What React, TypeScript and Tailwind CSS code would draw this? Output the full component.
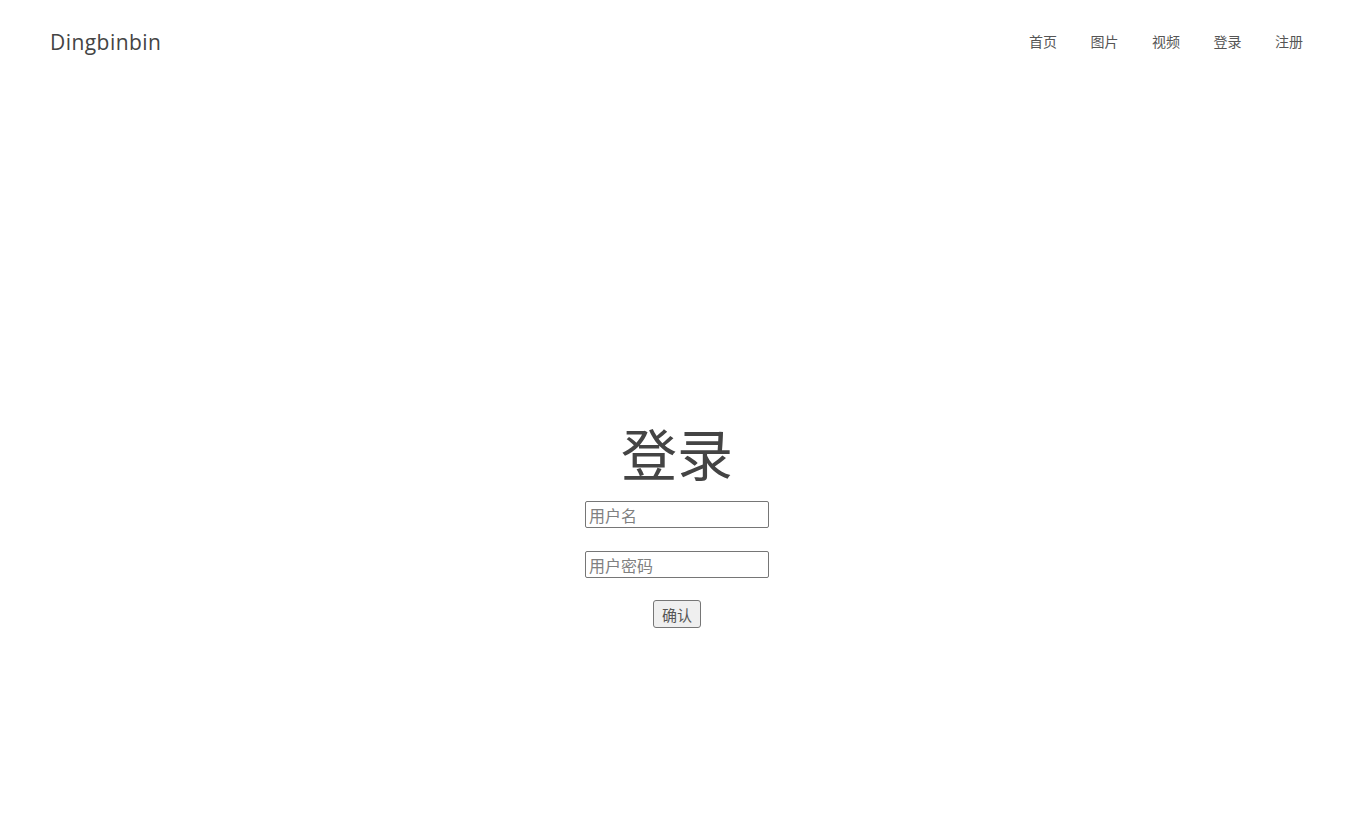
import React from "react";

export default function App() {
  return (
    <div className="w-[1354px] h-[820px] bg-white text-[#444] overflow-hidden">
      <header className="h-[84px] pl-[50px] pr-[51px] flex items-center justify-between font-['Segoe_UI','Open_Sans','Noto_Sans_CJK_SC',sans-serif]">
        <div className="text-[21px] tracking-[0.45px] text-[#444] leading-none">Dingbinbin</div>
        <nav className="flex gap-[33.5px] text-[14px] leading-[20px] -mt-[2px] text-[#555] font-['Noto_Sans_CJK_SC',sans-serif]">
          <span>首页</span>
          <span>图片</span>
          <span>视频</span>
          <span>登录</span>
          <span>注册</span>
        </nav>
      </header>
      <main className="flex flex-col items-center font-['Noto_Sans_CJK_SC',sans-serif]">
        <h1 className="mt-[336px] text-[56px] leading-[64px] font-normal text-[#444]">登录</h1>
        <input
          className="mt-[17px] w-[184px] h-[27px] border border-[#767676] rounded-[2px] px-[3px] text-[16px] leading-none placeholder:text-[#808080] outline-none"
          placeholder="用户名"
        />
        <input
          className="mt-[23px] w-[184px] h-[27px] border border-[#767676] rounded-[2px] px-[3px] text-[16px] leading-none placeholder:text-[#808080] outline-none"
          placeholder="用户密码"
        />
        <button className="mt-[22px] w-[48px] h-[28px] border border-[#767676] rounded-[3px] bg-[#efefef] text-[15px] text-[#555] leading-none">
          确认
        </button>
      </main>
    </div>
  );
}
